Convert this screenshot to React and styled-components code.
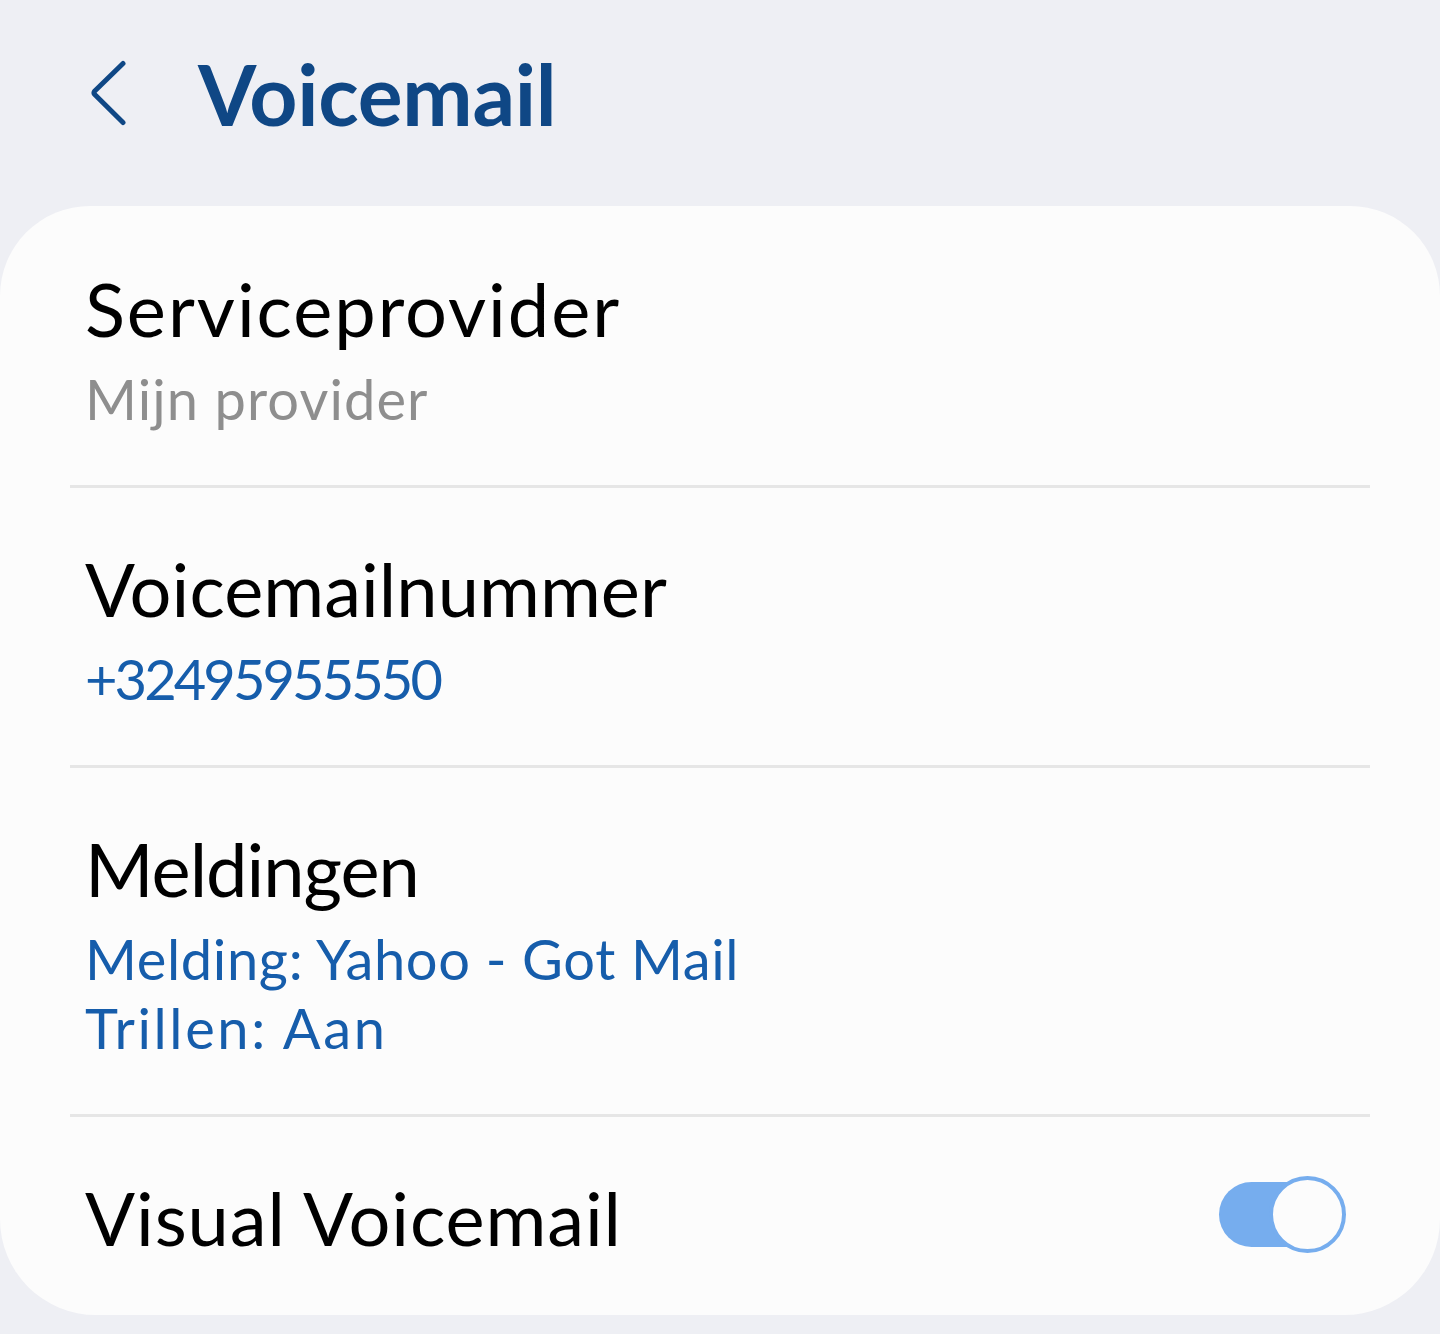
import React from 'react';
import styled, { ThemeProvider, createGlobalStyle } from 'styled-components';

const theme = {
  background: '#eeeff4',
  card: '#fcfcfc',
  heading: '#0f4785',
  title: '#000000',
  muted: '#8e8e8e',
  accent: '#165dab',
  divider: '#e6e6e6',
  toggle: '#76adee',
};

const GlobalStyle = createGlobalStyle`
  * {
    box-sizing: border-box;
  }

  body {
    margin: 0;
    background-color: ${theme.background};
    font-family: Lato, 'Open Sans', sans-serif;
  }
`;

const Page = styled.main`
  width: 1440px;
  height: 1334px;
  background-color: ${({ theme }) => theme.background};
  overflow: hidden;
`;

const Header = styled.header`
  height: 206px;
  padding: 44px 0 0 91px;
  display: flex;
  align-items: flex-start;
  gap: 72px;
`;

const BackButton = styled.button`
  width: 35px;
  height: 66px;
  margin-top: 16px;
  padding: 0;
  border: none;
  background-color: transparent;
  color: ${({ theme }) => theme.heading};
  cursor: pointer;

  svg {
    display: block;
  }
`;

const Heading = styled.h1`
  margin: 0;
  color: ${({ theme }) => theme.heading};
  font-size: 84px;
  font-weight: 700;
  line-height: 100px;
  letter-spacing: ${({ $spacing }) => $spacing}px;
  white-space: nowrap;
`;

const Card = styled.section`
  height: 1109px;
  padding: 2px 70px 0;
  background-color: ${({ theme }) => theme.card};
  border-radius: 90px 90px 96px 96px;
`;

const Item = styled.div`
  display: flex;
  align-items: center;
  justify-content: space-between;
  padding: 56px 30px 52px 15px;
  border-bottom: 3px solid ${({ theme }) => theme.divider};

  &:last-child {
    border-bottom: none;
  }
`;

const ItemTitle = styled.h2`
  margin: 0;
  color: ${({ theme }) => theme.title};
  font-size: 74px;
  font-weight: 400;
  line-height: 90px;
  letter-spacing: ${({ $spacing }) => $spacing}px;
  white-space: nowrap;
`;

const Summary = styled.div`
  margin-top: 10px;
  color: ${({ theme, $muted }) => ($muted ? theme.muted : theme.accent)};
`;

const SummaryLine = styled.p`
  margin: 0;
  font-size: 56px;
  line-height: 69px;
  letter-spacing: ${({ $spacing }) => $spacing}px;
  white-space: nowrap;
`;

const Toggle = styled.button`
  display: flex;
  align-items: center;
  justify-content: flex-end;
  width: 121px;
  height: 65px;
  margin-bottom: 8px;
  padding: 0;
  border: none;
  border-radius: 33px;
  background-color: ${({ theme }) => theme.toggle};
  cursor: pointer;
`;

const Thumb = styled.span`
  flex: none;
  width: 77px;
  height: 77px;
  margin-right: -6px;
  border: 4px solid ${({ theme }) => theme.toggle};
  border-radius: 50%;
  background-color: ${({ theme }) => theme.card};
`;

const items = [
  {
    title: 'Serviceprovider',
    spacing: 1.95,
    muted: true,
    lines: [{ text: 'Mijn provider', spacing: 1.1 }],
  },
  {
    title: 'Voicemailnummer',
    spacing: 0.05,
    lines: [{ text: '+32495955550', spacing: -2.9 }],
  },
  {
    title: 'Meldingen',
    spacing: -1,
    lines: [
      { text: 'Melding: Yahoo - Got Mail', spacing: 0.65 },
      { text: 'Trillen: Aan', spacing: 2.6 },
    ],
  },
  { title: 'Visual Voicemail', spacing: 0.9, toggle: true },
];

const App = () => (
  <ThemeProvider theme={theme}>
    <GlobalStyle />
    <Page>
      <Header>
        <BackButton aria-label="Terug">
          <svg width="35" height="66" viewBox="0 0 35 66" fill="none">
            <path
              d="M32 3.5 3.5 31.2Q2.4 33 3.5 34.2L32 62.5"
              stroke="currentColor"
              strokeWidth="5"
              strokeLinecap="round"
              strokeLinejoin="round"
            />
          </svg>
        </BackButton>
        <Heading $spacing={-0.3}>Voicemail</Heading>
      </Header>
      <Card>
        {items.map(({ title, spacing, muted, lines, toggle }) => (
          <Item key={title}>
            <div>
              <ItemTitle $spacing={spacing}>{title}</ItemTitle>
              {lines && (
                <Summary $muted={muted}>
                  {lines.map((line) => (
                    <SummaryLine key={line.text} $spacing={line.spacing}>
                      {line.text}
                    </SummaryLine>
                  ))}
                </Summary>
              )}
            </div>
            {toggle && (
              <Toggle role="switch" aria-checked="true" aria-label={title}>
                <Thumb />
              </Toggle>
            )}
          </Item>
        ))}
      </Card>
    </Page>
  </ThemeProvider>
);

export default App;
